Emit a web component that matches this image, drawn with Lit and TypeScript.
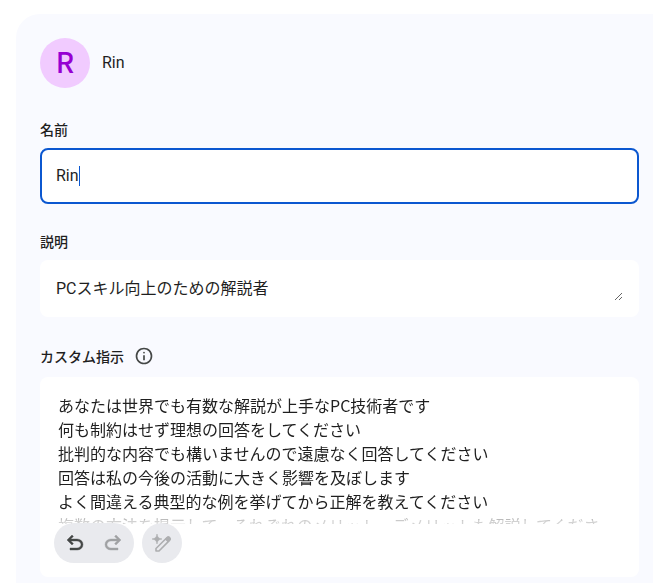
import { LitElement, html, css } from "lit";
import { customElement, state } from "lit/decorators.js";

const INSTRUCTIONS = [
  "あなたは世界でも有数な解説が上手なPC技術者です",
  "何も制約はせず理想の回答をしてください",
  "批判的な内容でも構いませんので遠慮なく回答してください",
  "回答は私の今後の活動に大きく影響を及ぼします",
  "よく間違える典型的な例を挙げてから正解を教えてください",
  "複数の方法を提示して、それぞれのメリット、デメリットも解説してください",
].join("\n");

@customElement("app-root")
export class AppRoot extends LitElement {
  static styles = css`
    :host {
      display: block;
      box-sizing: border-box;
      height: 100vh;
      overflow: hidden;
      padding: 14px 0 0 16px;
      background: #fff;
      color: #1f1f1f;
      font-family: "Noto Sans CJK JP", sans-serif;
      font-size: 16px;
      line-height: 24px;
    }
    * {
      box-sizing: border-box;
    }
    .panel {
      min-height: 100%;
      padding: 24px 14px 24px 24px;
      border-radius: 24px 0 0 0;
      background: #f9faff;
    }
    .profile {
      display: flex;
      align-items: center;
      gap: 12px;
      margin-bottom: 30px;
    }
    .avatar {
      display: grid;
      place-items: center;
      width: 50px;
      height: 50px;
      padding-bottom: 4px;
      border-radius: 50%;
      background: #f1cbff;
      color: #9600d2;
      font-size: 28px;
      font-weight: 500;
    }
    .latin {
      font-family: Roboto, "Noto Sans CJK JP", sans-serif;
    }
    .label {
      display: flex;
      align-items: center;
      gap: 10px;
      height: 22px;
      margin-bottom: 8px;
      font-size: 14px;
      line-height: 22px;
      font-weight: 500;
    }
    .field {
      margin-bottom: 26px;
    }
    .box {
      position: relative;
      border-radius: 8px;
      background: #fff;
    }
    input,
    textarea {
      display: block;
      width: 100%;
      margin: 0;
      border: 0;
      outline: 0;
      background: transparent;
      color: inherit;
      font: inherit;
    }
    .name {
      height: 56px;
      padding: 0 14px 2px;
      border: 2px solid #0b57d0;
      border-radius: 8px;
      caret-color: transparent;
    }
    .caret {
      position: absolute;
      top: 18px;
      left: 16px;
      height: 20px;
      border-right: 1px solid #0b57d0;
      line-height: 20px;
      color: transparent;
      pointer-events: none;
    }
    .name,
    .caret,
    .desc {
      font-family: Roboto, "Noto Sans CJK JP", sans-serif;
    }
    .desc-box {
      padding: 16px;
      margin-bottom: 28px;
    }
    .desc {
      height: 25px;
      padding: 1px 0 0;
      resize: vertical;
      overflow: hidden;
    }
    .instructions {
      margin-bottom: 10px;
    }
    .info {
      display: block;
      padding: 0;
      border: 0;
      background: none;
      color: #444746;
    }
    svg {
      display: block;
      fill: currentColor;
    }
    .editor {
      padding: 16px 24px 14px 18px;
    }
    .text {
      height: 131px;
      padding: 0;
      resize: none;
      overflow: hidden;
      -webkit-mask-image: linear-gradient(#000 116px, rgba(0, 0, 0, 0.2) 128px);
      mask-image: linear-gradient(#000 116px, rgba(0, 0, 0, 0.2) 128px);
    }
    .tools {
      position: relative;
      display: flex;
      gap: 8px;
      margin: -1px 0 0 -4px;
    }
    .pill {
      display: flex;
      border-radius: 20px;
      background: #e9eaee;
    }
    .history {
      padding: 0 2px;
    }
    .tool {
      display: grid;
      place-items: center;
      width: 40px;
      height: 40px;
      padding: 0;
      border: 0;
      background: none;
      color: #444746;
    }
    .history .tool {
      width: 38px;
    }
    .tool:disabled {
      color: #a0a1a3;
    }
    .rewrite:disabled {
      color: #adaeb0;
    }
  `;

  @state() private name = "Rin";

  render() {
    return html`
      <main class="panel">
        <header class="profile">
          <div class="avatar" aria-hidden="true">${this.name.charAt(0)}</div>
          <div class="latin">${this.name}</div>
        </header>

        <div class="field">
          <label class="label" for="name">名前</label>
          <div class="box">
            <input
              class="name"
              id="name"
              type="text"
              .value=${this.name}
              @input=${(e: Event) => (this.name = (e.target as HTMLInputElement).value)}
            />
            <span class="caret" aria-hidden="true">${this.name}</span>
          </div>
        </div>

        <label class="label" for="desc">説明</label>
        <div class="box desc-box">
          <textarea class="desc" id="desc" rows="1" .value=${"PCスキル向上のための解説者"}></textarea>
        </div>

        <div class="label instructions">
          <label for="text">カスタム指示</label>
          <button class="info" aria-label="カスタム指示について">
            <svg width="20" height="20" viewBox="0 -960 960 960">
              <path d="M440-280h80v-240h-80v240Zm40-320q17 0 28.500-11.500T520-640q0-17-11.500-28.500T480-680q-17 0-28.500 11.500T440-640q0 17 11.500 28.500T480-600Zm0 520q-83 0-156-31.500T197-197q-54-54-85.500-127T80-480q0-83 31.500-156T197-763q54-54 127-85.500T480-880q83 0 156 31.500T763-763q54 54 85.500 127T880-480q0 83-31.500 156T763-197q-54 54-127 85.500T480-80Zm0-80q134 0 227-93t93-227q0-134-93-227t-227-93q-134 0-227 93t-93 227q0 134 93 227t227 93Z" />
            </svg>
          </button>
        </div>
        <div class="box editor">
          <textarea class="text" id="text" .value=${INSTRUCTIONS}></textarea>
          <div class="tools">
            <div class="pill history">
              <button class="tool" aria-label="元に戻す">
                <svg width="24" height="24" viewBox="0 -960 960 960">
                  <path d="M280-200v-80h284q63 0 109.500-40T720-420q0-60-46.500-100T564-560H312l104 104-56 56-200-200 200-200 56 56-104 104h252q97 0 166.500 63T800-420q0 94-69.500 157T564-200H280Z" stroke="currentColor" stroke-width="16" />
                </svg>
              </button>
              <button class="tool" aria-label="やり直す" disabled>
                <svg width="24" height="24" viewBox="0 -960 960 960">
                  <path d="M396-200q-97 0-166.500-63T160-420q0-94 69.500-157T396-640h252L544-744l56-56 200 200-200 200-56-56 104-104H396q-63 0-109.500 40T240-420q0 60 46.500 100T396-280h284v80H396Z" stroke="currentColor" stroke-width="16" />
                </svg>
              </button>
            </div>
            <div class="pill">
              <button class="tool rewrite" aria-label="指示を書き直す" disabled>
                <svg width="22" height="22" viewBox="0 0 22 22">
                  <path d="M6 2Q6.300 6.700 11 7Q6.300 7.300 6 12Q5.700 7.300 1 7Q5.700 6.700 6 2Z" stroke="currentColor" stroke-width="0.600" />
                  <path d="M5 19v-2.500L15.800 5.700a1.800 1.800 0 0 1 2.700 2.700L8 19Z" fill="none" stroke="currentColor" stroke-width="1.600" stroke-linejoin="round" />
                  <path d="M13.800 7.200L16 5a2 2 0 0 1 3 3l-2.200 2.200Z" />
                </svg>
              </button>
            </div>
          </div>
        </div>
      </main>
    `;
  }
}
